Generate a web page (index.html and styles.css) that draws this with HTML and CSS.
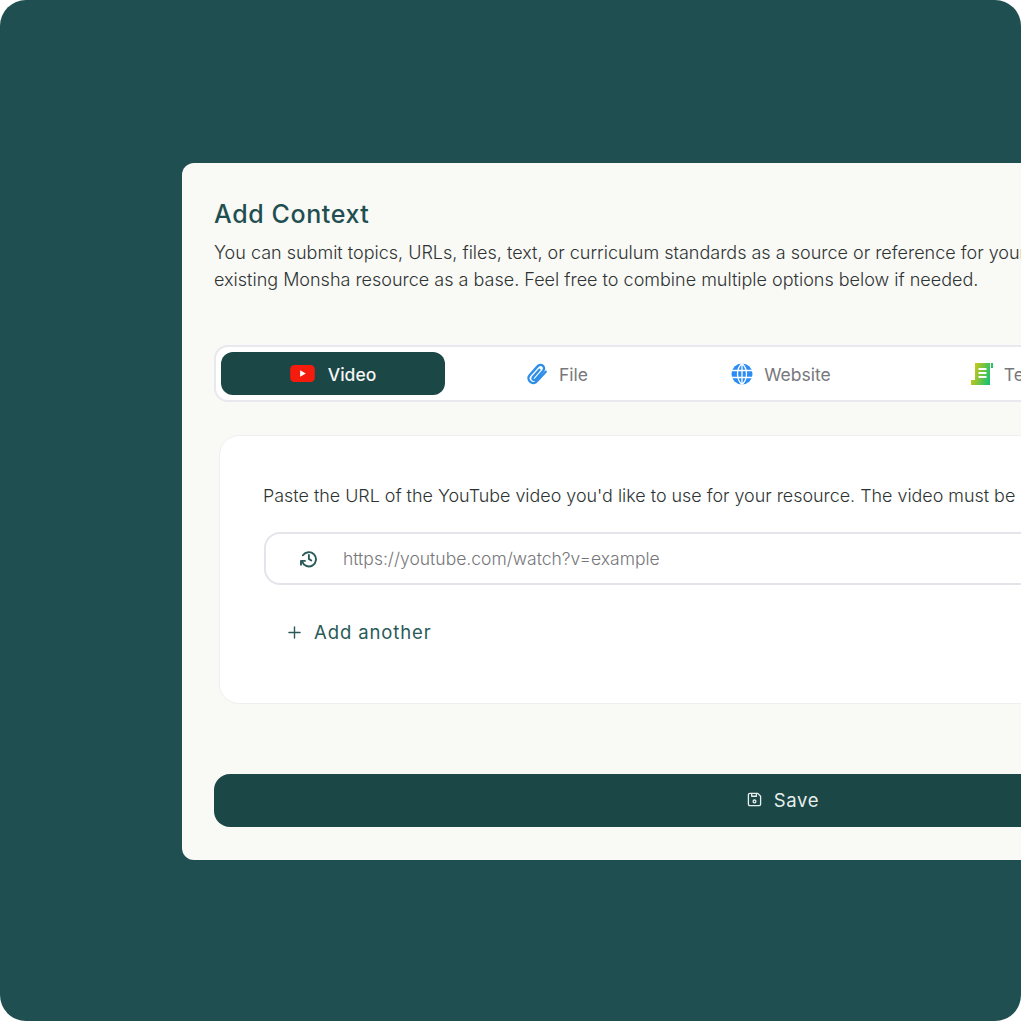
FILE: index.html
```html
<!DOCTYPE html>
<html lang="en">
<head>
    <meta charset="UTF-8">
    <meta name="viewport" content="width=device-width, initial-scale=1.0">
    <title>Add Context</title>
    <link rel="stylesheet" href="styles.css">
</head>
<body>

    <div class="stage">
        <section class="panel">
            <h2 class="title">Add Context</h2>
            <p class="intro">You can submit topics, URLs, files, text, or curriculum standards as a source or reference for your<br>existing Monsha resource as a base. Feel free to combine multiple options below if needed.</p>

            <div class="tabs">
                <div class="tab tab-active">
                    <svg class="icon-yt" viewBox="0 0 26 18"><rect width="26" height="18" rx="4.5" fill="#f61c0d"/><path d="M10.5 5.5v7l6-3.5z" fill="#fff"/></svg>
                    <span>Video</span>
                </div>
                <div class="tab">
                    <svg class="icon" viewBox="0 0 24 24" fill="none" stroke="#2f8fe8" stroke-width="2.6" stroke-linecap="round" stroke-linejoin="round"><path d="M21.500 9.500l-9.600 10.400a5 5 0 0 1-8-6.500l8.900-10a3.900 3.900 0 0 1 6 5l-8.500 9.700a1.900 1.900 0 0 1-2.900-2.400l7.300-8.300"/></svg>
                    <span>File</span>
                </div>
                <div class="tab">
                    <svg class="icon" viewBox="0 0 22 22"><circle cx="11" cy="11" r="10.500" fill="#2b8cf5"/><path d="M1 7.500h20M1 14.500h20M11 0.500v21M11 0.500c-6 5-6 16 0 21M11 0.500c6 5 6 16 0 21" fill="none" stroke="#fff" stroke-width="1.300"/></svg>
                    <span>Website</span>
                </div>
                <div class="tab">
                    <svg class="icon" viewBox="0 0 22 22">
                        <defs><linearGradient id="scroll" x1="0" y1="0" x2="1" y2="0.300"><stop offset="0" stop-color="#f3c800"/><stop offset="1" stop-color="#16c172"/></linearGradient></defs>
                        <path d="M4 0h15v22H0v-5h4zM20 0h2v5h-2z" fill="url(#scroll)"/>
                        <path d="M7.500 6h8M7.500 10h8M7.500 14h8" stroke="#fff" stroke-width="1.800"/>
                    </svg>
                    <span>Text</span>
                </div>
            </div>

            <div class="card">
                <p class="card-text">Paste the URL of the YouTube video you'd like to use for your resource. The video must be</p>
                <div class="url-field">
                    <svg class="icon-history" viewBox="0 0 24 24" fill="none" stroke="#2a5a58" stroke-width="2.400" stroke-linecap="round" stroke-linejoin="round"><path d="M5 8a9 9 0 1 1-1 8"/><path d="M2.500 20v-5h5"/><path d="M12.500 7.500v5l3 2"/></svg>
                    <span class="placeholder">https://youtube.com/watch?v=example</span>
                </div>
                <div class="add-row">
                    <svg class="icon-plus" viewBox="0 0 14 14" fill="none" stroke="#2a5a58" stroke-width="1.500" stroke-linecap="round"><path d="M7 1v12M1 7h12"/></svg>
                    <span>Add another</span>
                </div>
            </div>

            <button class="save-btn" type="button">
                <svg class="icon-save" viewBox="0 0 16 16" fill="none" stroke="#e8eeec" stroke-width="1.400" stroke-linejoin="round"><path d="M3 1.500h8.500l3 3V13a1.500 1.500 0 0 1-1.500 1.500H3A1.500 1.500 0 0 1 1.500 13V3A1.500 1.500 0 0 1 3 1.500z"/><path d="M5 1.500v3h5v-3"/><circle cx="8" cy="10" r="1.500"/></svg>
                <span>Save</span>
            </button>
        </section>
    </div>

</body>
</html>
```

FILE: styles.css
```css
html, body {
    margin: 0;
    padding: 0;
    background: #ffffff;
}
body {
    font-family: Inter, Arial, sans-serif;
    overflow: hidden;
    width: 1021px;
    height: 1021px;
}
.stage {
    width: 1021px;
    height: 1021px;
    box-sizing: border-box;
    padding: 163px 0 0 182px;
    background: #1f4f50;
    border-radius: 26px;
    overflow: hidden;
}
.panel {
    width: 1202px;
    height: 697px;
    box-sizing: border-box;
    padding: 34px 32px 0;
    background: #f9f9f6;
    border-radius: 12px;
}
.title {
    margin: 0;
    font-size: 25px;
    line-height: 34px;
    font-weight: 500;
    letter-spacing: 0.6px;
    color: #1f4f50;
}
.intro {
    margin: 8px 0 0;
    font-size: 18px;
    line-height: 27px;
    font-weight: 300;
    color: #2e3433;
    white-space: nowrap;
}
.tabs {
    display: flex;
    width: 1138px;
    height: 57px;
    box-sizing: border-box;
    margin-top: 52px;
    padding: 5px;
    background: #ffffff;
    border: 2px solid #e8e8ee;
    border-radius: 14px;
}
.tab {
    flex: 0 0 224px;
    display: flex;
    align-items: center;
    justify-content: center;
    gap: 11px;
    border-radius: 12px;
    font-size: 17.500px;
    line-height: 24px;
    font-weight: 400;
    color: #77777c;
}
.tab span {
    padding-top: 2px;
}
.tab-active {
    background: #1b4746;
    color: #f4f6f5;
    font-weight: 500;
    gap: 13px;
}
.icon-yt {
    width: 25px;
    height: 17px;
}
.icon {
    width: 22px;
    height: 22px;
}
.card {
    width: 1133px;
    height: 269px;
    box-sizing: border-box;
    margin: 33px 0 0 5px;
    padding: 46px 44px 0;
    background: #ffffff;
    border: 1px solid #efeff1;
    border-radius: 20px;
}
.card-text {
    margin: 0 0 0 -1px;
    font-size: 17.900px;
    line-height: 27px;
    font-weight: 300;
    color: #2e3433;
    white-space: nowrap;
}
.url-field {
    display: flex;
    align-items: center;
    height: 53px;
    box-sizing: border-box;
    margin-top: 23px;
    padding-left: 33px;
    border: 2px solid #e6e4ea;
    border-radius: 16px;
}
.icon-history {
    width: 19px;
    height: 19px;
}
.placeholder {
    margin-left: 25px;
    font-size: 17.500px;
    font-weight: 300;
    color: #77777a;
}
.add-row {
    display: flex;
    align-items: center;
    gap: 13px;
    margin: 33px 0 0 24px;
    font-size: 18.500px;
    line-height: 28px;
    letter-spacing: 0.9px;
    color: #2a5a58;
}
.icon-plus {
    width: 13px;
    height: 13px;
}
.save-btn {
    display: flex;
    align-items: center;
    justify-content: center;
    gap: 12px;
    width: 1138px;
    height: 53px;
    margin-top: 70px;
    padding: 0 0 2px;
    background: #1b4746;
    border: none;
    border-radius: 16px;
    font-family: Inter, sans-serif;
    font-size: 18.500px;
    letter-spacing: 0.7px;
    color: #e8eeec;
}
.icon-save {
    width: 15px;
    height: 15px;
}
```
